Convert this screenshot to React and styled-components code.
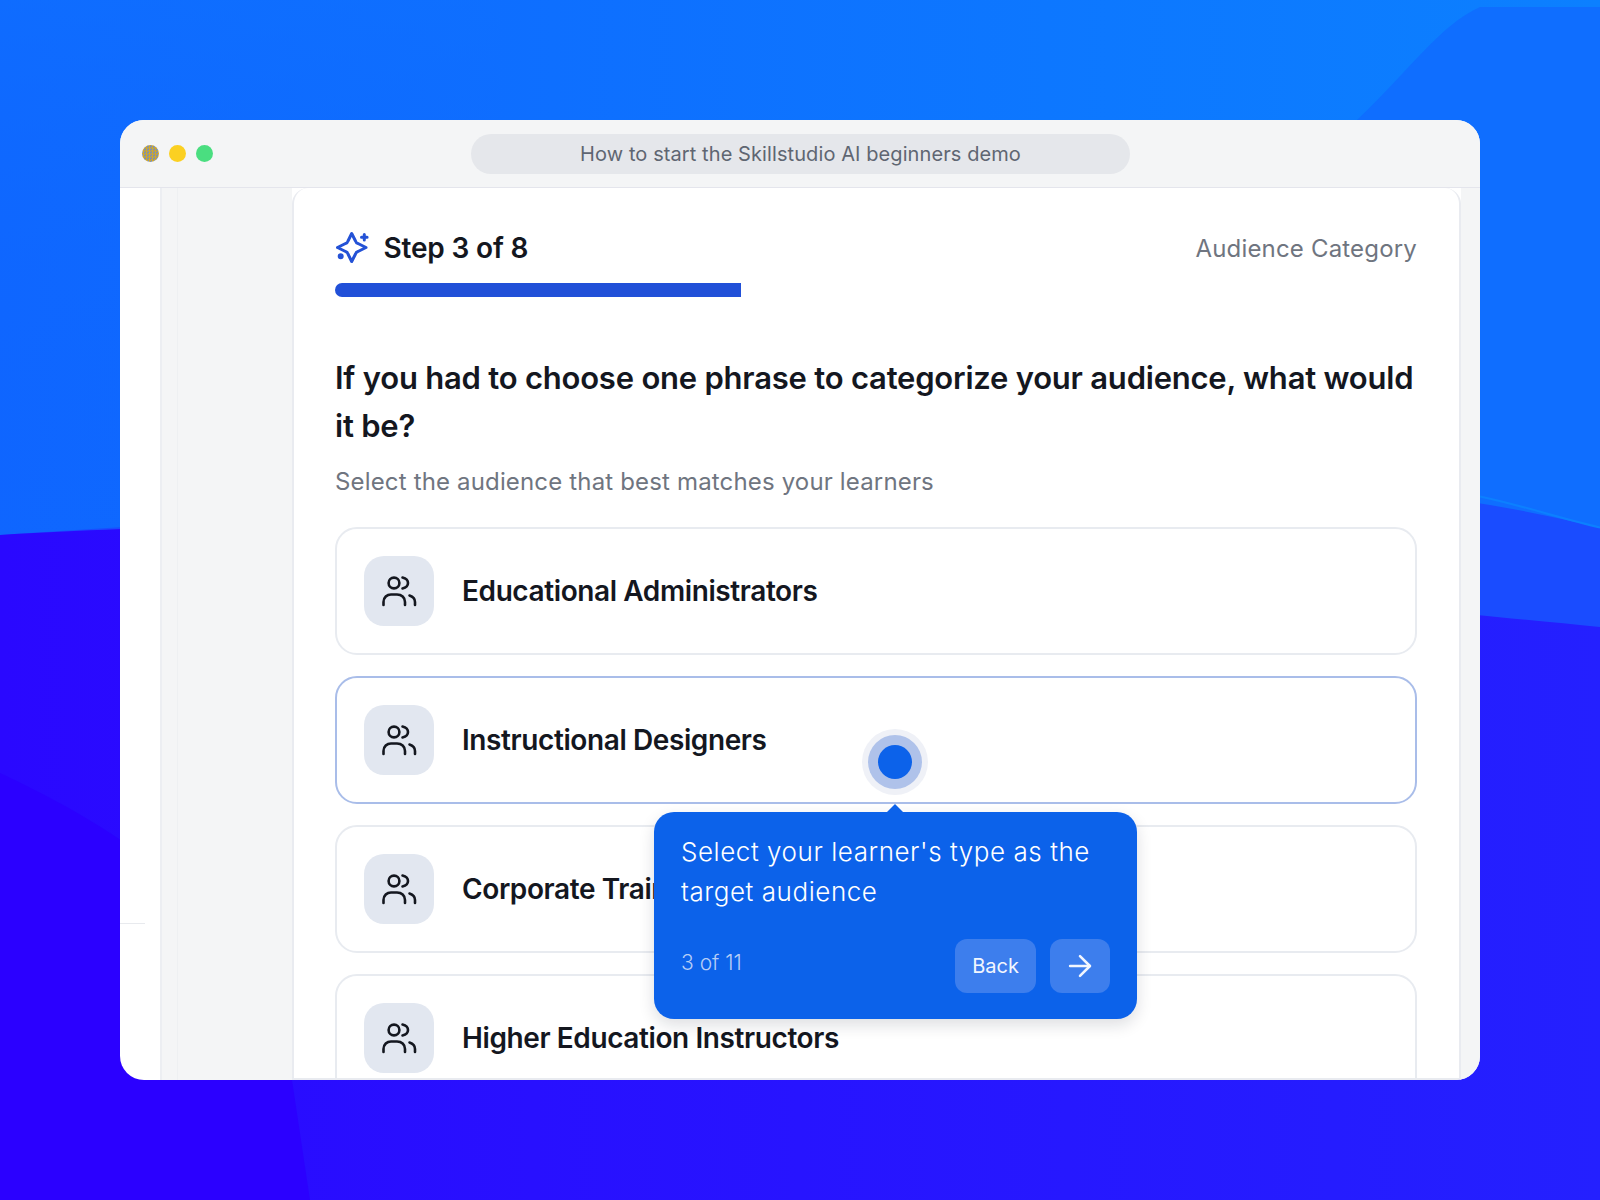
import React from "react";
import styled, { createGlobalStyle } from "styled-components";
import { ArrowRight } from "lucide-react";

const Global = createGlobalStyle`
  html, body { margin: 0; padding: 0; }
  body { font-family: Inter, "Liberation Sans", sans-serif; background: #2a00ff; }
  * { box-sizing: border-box; }
`;

const Page = styled.div`
  position: relative;
  width: 1600px;
  height: 1200px;
  padding: 120px;
  overflow: hidden;
`;

const Backdrop = styled.svg`
  position: absolute;
  inset: 0;
  width: 1600px;
  height: 1200px;
`;

const Window = styled.div`
  position: relative;
  width: 1360px;
  height: 960px;
  border-radius: 24px;
  background: #ffffff;
  display: flex;
  flex-direction: column;
`;

const TitleBar = styled.div`
  flex: none;
  height: 68px;
  padding: 0 22px;
  background: #f4f5f6;
  border-bottom: 1px solid #e4e5ec;
  border-radius: 24px 24px 0 0;
  display: flex;
  align-items: center;
`;

const Lights = styled.div`
  display: flex;
  gap: 10px;
  width: 329px;
`;

const Light = styled.span`
  width: 17px;
  height: 17px;
  border-radius: 50%;
  background: ${(p) => p.$fill};
`;

const UrlBar = styled.div`
  width: 659px;
  height: 40px;
  border-radius: 20px;
  background: #e5e7eb;
  color: #5f6672;
  font-size: 20px;
  letter-spacing: 0.09px;
  display: flex;
  align-items: center;
  justify-content: center;
`;

const Body = styled.div`
  flex: 1;
  min-height: 0;
  display: flex;
  overflow: hidden;
  border-radius: 0 0 24px 24px;
`;

const Rail = styled.div`
  flex: none;
  width: 40px;
  padding-top: 735px;
`;

const RailLine = styled.div`
  width: 25px;
  height: 1px;
  background: #e8eaee;
`;

const Sidebar = styled.div`
  flex: none;
  width: 132px;
  background: #f4f5f6;
  border-left: 2px solid #eceef2;
  display: flex;
`;

const SidebarStrip = styled.div`
  width: 16px;
  border-right: 1px solid #eef0f2;
`;

const Gutter = styled.div`
  flex: none;
  width: 19px;
  background: #f4f5f6;
`;

const Card = styled.main`
  flex: none;
  width: 1169px;
  background: #ffffff;
  border: 2px solid #e9ebf0;
  border-top: none;
  border-radius: 16px 16px 0 0;
  padding: 40px 42px 0 41px;
  overflow: hidden;
`;

const CardHead = styled.div`
  display: flex;
  align-items: center;
  justify-content: space-between;
  height: 40px;
`;

const StepGroup = styled.div`
  display: flex;
  align-items: center;
  gap: 12.5px;
  color: #2452d6;
`;

const StepText = styled.div`
  font-size: 28px;
  font-weight: 600;
  letter-spacing: -0.18px;
  color: #14171f;
`;

const Category = styled.div`
  font-size: 24px;
  letter-spacing: 0.18px;
  color: #6f7580;
`;

const Progress = styled.div`
  margin-top: 15px;
  height: 14px;
  width: 100%;
`;

const ProgressFill = styled.div`
  height: 100%;
  border-radius: 7px 0 0 7px;
  background: #2150d8;
`;

const Question = styled.h1`
  margin: 57px 0 0;
  font-size: 31px;
  line-height: 48px;
  font-weight: 600;
  letter-spacing: -0.22px;
  color: #14171f;
`;

const Hint = styled.p`
  margin: 16px 0 0;
  font-size: 24px;
  line-height: 32px;
  letter-spacing: 0.16px;
  color: #6f7580;
`;

const Options = styled.div`
  margin-top: 28.5px;
  display: flex;
  flex-direction: column;
  gap: 21.33px;
`;

const Option = styled.div`
  flex: none;
  height: 128px;
  border-radius: 22px;
  border: 2px solid ${(p) => (p.$active ? "#a9bde9" : "#e8ebf0")};
  padding: 0 27px;
  display: flex;
  align-items: center;
  gap: 28px;
`;

const OptionIcon = styled.div`
  flex: none;
  width: 70px;
  height: 70px;
  border-radius: 20px;
  background: #e2e7f0;
  color: #14171f;
  display: flex;
  align-items: center;
  justify-content: center;
`;

const OptionLabel = styled.div`
  font-size: 28px;
  font-weight: 600;
  letter-spacing: -0.4px;
  color: #14171f;
`;

const Dot = styled.div`
  position: absolute;
  left: 742px;
  top: 609px;
  width: 66px;
  height: 66px;
  border-radius: 50%;
  background: #eff1f7;
  display: flex;
  align-items: center;
  justify-content: center;
`;

const DotRing = styled.div`
  width: 54px;
  height: 54px;
  border-radius: 50%;
  background: #afc2ea;
  display: flex;
  align-items: center;
  justify-content: center;
`;

const DotCore = styled.div`
  width: 34px;
  height: 34px;
  border-radius: 50%;
  background: #0c62ea;
`;

const Tooltip = styled.div`
  position: absolute;
  left: 534px;
  top: 692px;
  width: 483px;
  height: 207px;
  padding: 20px 27px 26px;
  border-radius: 20px;
  background: #0c62ea;
  box-shadow: 0 6px 16px rgba(15, 23, 42, 0.14);
  color: #ffffff;
  display: flex;
  flex-direction: column;
  justify-content: space-between;

  &::before {
    content: "";
    position: absolute;
    left: 233px;
    top: -8px;
    border-left: 8px solid transparent;
    border-right: 8px solid transparent;
    border-bottom: 8px solid #0c62ea;
  }
`;

const TipText = styled.div`
  font-size: 26px;
  line-height: 40px;
  font-weight: 300;
  letter-spacing: 0.55px;
`;

const TipFooter = styled.div`
  display: flex;
  align-items: flex-start;
  justify-content: space-between;
`;

const TipCount = styled.div`
  font-size: 21px;
  line-height: 48px;
  font-weight: 300;
  color: #b6cdf7;
`;

const TipButtons = styled.div`
  display: flex;
  gap: 14px;
`;

const TipButton = styled.button`
  width: ${(p) => p.$width}px;
  height: 54px;
  border: none;
  border-radius: 12px;
  background: #3d7eed;
  color: #f2f6fe;
  font: 400 20px Inter, "Liberation Sans", sans-serif;
  padding: 0;
  display: flex;
  align-items: center;
  justify-content: center;
`;

const SparkleIcon = () => (
  <svg width="36" height="36" viewBox="-1 -2 36 36" fill="none" stroke="currentColor" strokeWidth="3" strokeLinejoin="round" strokeLinecap="round">
    <path d="M15.700 1.500L19.500 9Q20 11 22 11.500L30 15.500L22 19.500Q20 20 19.500 22L15.700 29.500L12 22Q11.500 20 9.500 19.500L1.500 15.500L9.500 11.500Q11.500 11 12 9Z" />
    <path d="M28.300 2.500v5.600M25.500 5.300h5.600" />
    <circle cx="4.700" cy="24.300" r="1.500" fill="currentColor" />
  </svg>
);

const UsersIcon = () => (
  <svg width="36" height="32" viewBox="0 0 36 32" fill="none" stroke="currentColor" strokeWidth="2.6" strokeLinecap="round">
    <circle cx="13" cy="8" r="5.400" />
    <path d="M21.500 2.500c3.300.8 5.500 2.900 5.500 5.500s-2.200 4.700-5.500 5.500" />
    <path d="M2.500 30v-3c0-4.500 3.500-7.500 7.500-7.500h6c4.500 0 8 3 8 7.500v3" />
    <path d="M28.500 20.500c3 1 5.500 3.500 5.500 6.500v3" />
  </svg>
);

const audiences = [
  "Educational Administrators",
  "Instructional Designers",
  "Corporate Trainers",
  "Higher Education Instructors",
];

export default function App() {
  return (
    <Page>
      <Global />
      <Backdrop viewBox="0 0 1600 1200" aria-hidden="true">
        <defs>
          <linearGradient id="sky" x1="0" x2="1" y1="0" y2="0">
            <stop offset="0" stopColor="#0f66ff" />
            <stop offset="1" stopColor="#0c80ff" />
          </linearGradient>
          <linearGradient id="skyDown" x1="0" x2="0" y1="0" y2="1">
            <stop offset="0" stopColor="#0f70ff" stopOpacity="0.6" />
            <stop offset="1" stopColor="#0f5fff" stopOpacity="0" />
          </linearGradient>
          <linearGradient id="deep" x1="0" x2="1" y1="0" y2="0">
            <stop offset="0" stopColor="#2a08ff" />
            <stop offset="1" stopColor="#2420ff" />
          </linearGradient>
        </defs>
        <rect width="1600" height="1200" fill="url(#sky)" />
        <rect width="500" height="540" fill="url(#skyDown)" />
        <path d="M1600 7H1480C1440 25 1410 70 1357 120L1300 580H1600Z" fill="#0f6eff" />
        <path d="M0 535C300 515 700 490 1000 480C1250 470 1450 490 1600 528V1200H0Z" fill="#1a4cff" />
        <path d="M1480 496.500C1520 505 1560 518 1600 527.500" fill="none" stroke="#0c80ff" strokeWidth="2" />
        <path d="M0 535C300 515 800 530 1000 560C1200 590 1450 612 1600 627V1200H0Z" fill="url(#deep)" />
        <path d="M0 773C100 820 200 880 280 1000L310 1200H0Z" fill="#2b00ff" />
      </Backdrop>
      <Window>
        <TitleBar>
          <Lights>
            <Light $fill="repeating-conic-gradient(#cfa92c 0 25%, #7f8fae 0 50%) 0 0 / 3px 3px" />
            <Light $fill="#fbd022" />
            <Light $fill="#4ade80" />
          </Lights>
          <UrlBar>How to start the Skillstudio AI beginners demo</UrlBar>
        </TitleBar>
        <Body>
          <Rail>
            <RailLine />
          </Rail>
          <Sidebar>
            <SidebarStrip />
          </Sidebar>
          <Card>
            <CardHead>
              <StepGroup>
                <SparkleIcon />
                <StepText>Step 3 of 8</StepText>
              </StepGroup>
              <Category>Audience Category</Category>
            </CardHead>
            <Progress>
              <ProgressFill style={{ width: `${(3 / 8) * 100}%` }} />
            </Progress>
            <Question>If you had to choose one phrase to categorize your audience, what would it be?</Question>
            <Hint>Select the audience that best matches your learners</Hint>
            <Options>
              {audiences.map((name, i) => (
                <Option key={name} $active={i === 1}>
                  <OptionIcon>
                    <UsersIcon />
                  </OptionIcon>
                  <OptionLabel>{name}</OptionLabel>
                </Option>
              ))}
            </Options>
          </Card>
          <Gutter />
        </Body>
        <Dot>
          <DotRing>
            <DotCore />
          </DotRing>
        </Dot>
        <Tooltip>
          <TipText>Select your learner's type as the target audience</TipText>
          <TipFooter>
            <TipCount>3 of 11</TipCount>
            <TipButtons>
              <TipButton $width={81}>Back</TipButton>
              <TipButton $width={60}>
                <ArrowRight size={34} strokeWidth={1.8} />
              </TipButton>
            </TipButtons>
          </TipFooter>
        </Tooltip>
      </Window>
    </Page>
  );
}
